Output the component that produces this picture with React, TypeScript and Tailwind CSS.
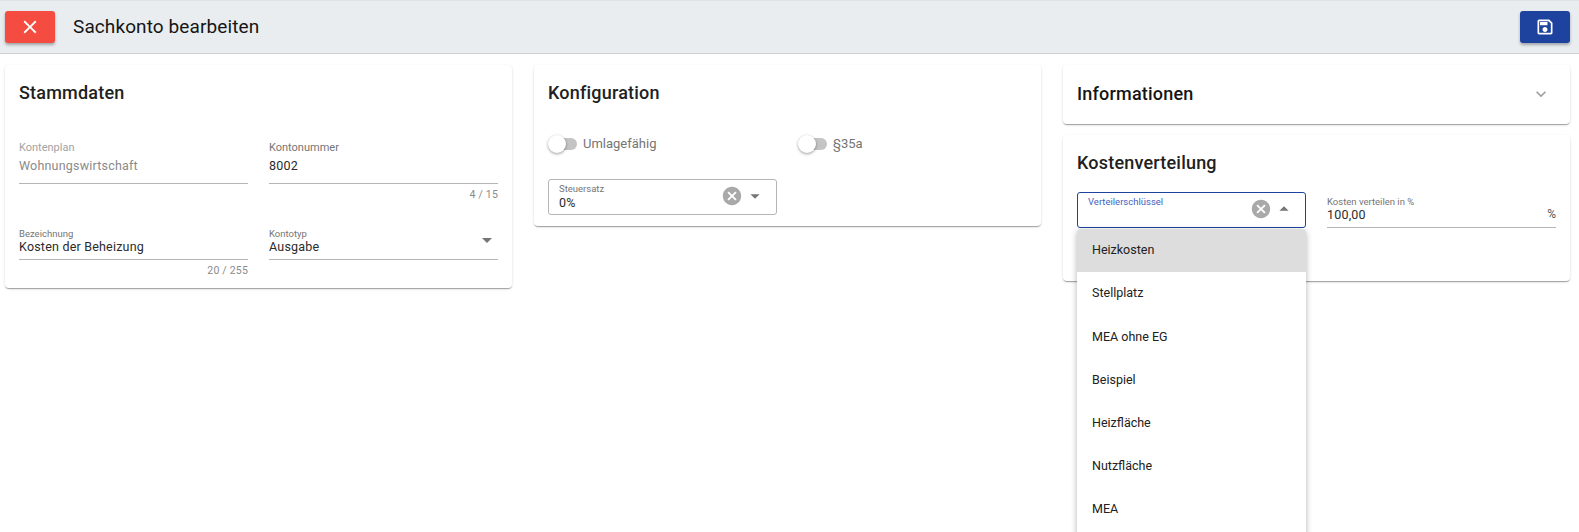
import type { ReactNode } from 'react'

const ICONS = {
  close: 'M19 6.41L17.59 5 12 10.59 6.41 5 5 6.41 10.59 12 5 17.59 6.41 19 12 13.41 17.59 19 19 17.59 13.41 12z',
  save: 'M17 3H5c-1.11 0-2 .9-2 2v14c0 1.1.89 2 2 2h14c1.1 0 2-.9 2-2V7l-4-4zm2 16H5V5h11.17L19 7.83V19zm-7-7c-1.66 0-3 1.34-3 3s1.34 3 3 3 3-1.34 3-3-1.34-3-3-3zM6 6h9v4H6z',
  cancel: 'M12 2C6.47 2 2 6.47 2 12s4.47 10 10 10 10-4.47 10-10S17.53 2 12 2zm5 13.59L15.59 17 12 13.41 8.41 17 7 15.59 10.59 12 7 8.41 8.41 7 12 10.59 15.59 7 17 8.41 13.41 12 17 15.59z',
  expand: 'M16.59 8.59L12 13.17 7.41 8.59 6 10l6 6 6-6z',
  down: 'M7 10l5 5 5-5z',
  up: 'M7 14l5-5 5 5z',
}

const CARD_SHADOW = 'shadow-[0_2px_1px_-1px_rgba(0,0,0,0.2),0_1px_1px_0_rgba(0,0,0,0.14),0_1px_3px_0_rgba(0,0,0,0.12)]'

function Icon({ name, className }: { name: keyof typeof ICONS; className: string }) {
  return (
    <svg viewBox="0 0 24 24" fill="currentColor" className={className}>
      <path d={ICONS[name]} />
    </svg>
  )
}

function Card({ title, children, className }: { title: string; children?: ReactNode; className?: string }) {
  return (
    <section className={`rounded bg-white px-[14px] ${CARD_SHADOW} ${className ?? ''}`}>
      <h2 className="pt-[16px] text-[18px] leading-[24px] font-medium tracking-[0.2px] text-[#212121]">{title}</h2>
      {children}
    </section>
  )
}

// Underlined text field: "large" has the roomy label of the first row, the others the small floating one
function Field({ label, value, helper, disabled, suffix, arrow, large, boxClass }: {
  label: string
  value: string
  helper?: string
  disabled?: boolean
  suffix?: string
  arrow?: boolean
  large?: boolean
  boxClass: string
}) {
  return (
    <div>
      <div className={`relative border-b border-[#b5b5b5] ${boxClass}`}>
        <div className={`leading-[12px] ${large ? 'text-[11px]' : 'text-[9.5px]'} ${disabled ? 'text-[#a3a3a3]' : 'text-[#757575]'}`}>{label}</div>
        <div className={`text-[12.5px] leading-[18px] tracking-[0.2px] ${large ? 'pt-[3px]' : 'mt-[-2px]'} ${disabled ? 'text-[#8a8a8a]' : 'text-[#2b2b2b]'}`}>{value}</div>
        {suffix && <span className="absolute right-0 bottom-[4px] text-[12px] text-[#555]">{suffix}</span>}
        {arrow && <Icon name="down" className="absolute right-[-1px] top-0 h-[24px] w-[24px] text-[#757575]" />}
      </div>
      {helper && <div className="pt-[5px] text-right text-[10.5px] leading-[12px] tracking-[0.2px] text-[#8a8a8a]">{helper}</div>}
    </div>
  )
}

function Toggle({ label }: { label: string }) {
  return (
    <div className="flex items-center">
      <div className="relative h-[18px] w-[29px]">
        <div className="absolute left-[6px] top-[3px] h-[12px] w-[23px] rounded-full bg-[#c4c4c4]" />
        <div className="absolute left-0 top-0 h-[18px] w-[18px] rounded-full bg-white shadow-[0_1px_3px_rgba(0,0,0,0.4)]" />
      </div>
      <span className="pl-[6px] text-[13px] text-[#757575]">{label}</span>
    </div>
  )
}

// Outlined select with clear button and arrow
function OutlinedSelect({ label, value, open }: { label: string; value?: string; open?: boolean }) {
  return (
    <div className={`relative h-[36px] w-full rounded-[3px] border pl-[10px] ${open ? 'border-[#1e439f]' : 'border-[#b5b5b5]'}`}>
      <div className={`pt-[3px] text-[9.5px] leading-[12px] ${open ? 'text-[#3f63c0]' : 'text-[#757575]'}`}>{label}</div>
      <div className="text-[12.5px] leading-[16px] tracking-[0.2px] text-[#2b2b2b]">{value}</div>
      <Icon name="cancel" className="absolute left-[172px] top-[5px] h-[22px] w-[22px] text-[#a9a9a9]" />
      <Icon name={open ? 'up' : 'down'} className="absolute left-[195px] top-[5px] h-[22px] w-[22px] text-[#757575]" />
    </div>
  )
}

const MENU_ITEMS = ['Heizkosten', 'Stellplatz', 'MEA ohne EG', 'Beispiel', 'Heizfläche', 'Nutzfläche', 'MEA']

export default function App() {
  return (
    <div className="relative h-[532px] overflow-hidden bg-white font-['Roboto',sans-serif]">
      {/* Toolbar */}
      <header className="flex h-[54px] items-center border-y border-t-[#dfe3e6] border-b-[#ccd0d3] bg-[#e9edf0] pl-[5px] pr-[9px]">
        <button className="flex h-[32px] w-[50px] items-center justify-center rounded-[3px] bg-[#f44c40] text-white shadow-[0_2px_3px_rgba(0,0,0,0.3)]">
          <Icon name="close" className="h-[22px] w-[22px]" />
        </button>
        <h1 className="pl-[18px] text-[19px] tracking-[0.1px] text-[#151515]">Sachkonto bearbeiten</h1>
        <button className="ml-auto flex h-[32px] w-[50px] items-center justify-center rounded-[3px] bg-[#1e439f] text-white shadow-[0_2px_3px_rgba(0,0,0,0.3)]">
          <Icon name="save" className="h-[20px] w-[20px]" />
        </button>
      </header>

      <main className="grid grid-cols-3 items-start gap-[22px] pl-[5px] pr-[9px] pt-[11px]">
        <Card title="Stammdaten" className="h-[223px]">
          <div className="grid grid-cols-2 gap-x-[21px] pt-[37px]">
            <Field label="Kontenplan" value="Wohnungswirtschaft" disabled large boxClass="h-[42px]" />
            <Field label="Kontonummer" value="8002" helper="4 / 15" large boxClass="h-[42px]" />
          </div>
          <div className="grid grid-cols-2 gap-x-[21px] pt-[27px]">
            <Field label="Bezeichnung" value="Kosten der Beheizung" helper="20 / 255" boxClass="h-[32px]" />
            <Field label="Kontotyp" value="Ausgabe" arrow boxClass="h-[32px]" />
          </div>
        </Card>

        <Card title="Konfiguration" className="h-[161px]">
          <div className="grid grid-cols-2 gap-x-[21px] pt-[29px]">
            <Toggle label="Umlagefähig" />
            <Toggle label="§35a" />
          </div>
          <div className="grid grid-cols-2 gap-x-[21px] pt-[25px]">
            <OutlinedSelect label="Steuersatz" value="0%" />
          </div>
        </Card>

        <div className="flex flex-col gap-[11px]">
          <section className={`flex h-[59px] items-center justify-between rounded bg-white pb-[2px] pl-[14px] pr-[19px] ${CARD_SHADOW}`}>
            <h2 className="text-[18px] font-medium tracking-[0.2px] text-[#151515]">Informationen</h2>
            <Icon name="expand" className="h-[20px] w-[20px] text-[#9e9e9e]" />
          </section>
          <Card title="Kostenverteilung" className="h-[146px]">
            <div className="grid grid-cols-2 gap-x-[21px] pt-[17px]">
              <OutlinedSelect label="Verteilerschlüssel" open />
              <div className="pt-[4px]">
                <Field label="Kosten verteilen in %" value="100,00" suffix="%" boxClass="h-[32px]" />
              </div>
            </div>
          </Card>
        </div>
      </main>

      {/* Open dropdown of Verteilerschlüssel */}
      <ul className="absolute left-[1077px] top-[229px] w-[229px] rounded-t bg-white pb-[20px] shadow-[0_2px_6px_rgba(0,0,0,0.3)]">
        {MENU_ITEMS.map((item, i) => (
          <li key={item} className={`flex h-[43.2px] items-center pl-[15px] text-[12.5px] text-[#212121] ${i === 0 ? 'rounded-t bg-[#dddddd]' : ''}`}>
            {item}
          </li>
        ))}
      </ul>
    </div>
  )
}
